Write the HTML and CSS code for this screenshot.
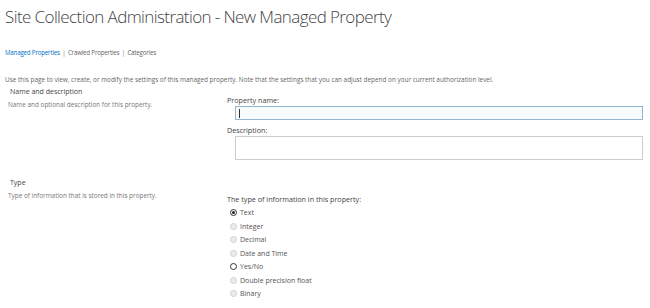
FILE: index.html
```html
<!DOCTYPE html>
<html lang="en">
<head>
    <meta charset="UTF-8">
    <title>New Managed Property</title>
    <link rel="stylesheet" href="styles.css">
</head>
<body>
    <h1 class="page-title">Site Collection Administration - New Managed Property</h1>

    <div class="crumbs">
        <a href="#" class="crumb active">Managed Properties</a>
        <span class="sep">|</span>
        <a href="#" class="crumb">Crawled Properties</a>
        <span class="sep">|</span>
        <a href="#" class="crumb">Categories</a>
    </div>

    <p class="intro">Use this page to view, create, or modify the settings of this managed property. Note that the settings that you can adjust depend on your current authorization level.</p>

    <div class="section section-name">
        <div class="section-info">
            <h3>Name and description</h3>
            <p>Name and optional description for this property.</p>
        </div>
        <div class="section-fields">
            <label class="field-label">Property name:</label>
            <div class="text-input focused"><span class="caret"></span></div>
            <label class="field-label">Description:</label>
            <div class="text-area"></div>
        </div>
    </div>

    <div class="section section-type">
        <div class="section-info">
            <h3>Type</h3>
            <p>Type of information that is stored in this property.</p>
        </div>
        <div class="section-fields">
            <label class="field-label">The type of information in this property:</label>
            <div class="radio-list">
                <div class="radio"><span class="dot checked"></span>Text</div>
                <div class="radio"><span class="dot disabled"></span>Integer</div>
                <div class="radio"><span class="dot disabled"></span>Decimal</div>
                <div class="radio"><span class="dot disabled"></span>Date and Time</div>
                <div class="radio"><span class="dot"></span>Yes/No</div>
                <div class="radio"><span class="dot disabled"></span>Double precision float</div>
                <div class="radio"><span class="dot disabled"></span>Binary</div>
            </div>
        </div>
    </div>
</body>
</html>
```

FILE: styles.css
```css
:root {
    --text: #444;
    --muted: #777;
    --link: #0072c6;
}

body {
    font-family: 'Open Sans', 'Noto Sans', sans-serif;
    background: white;
    color: var(--text);
    margin: 0;
    padding: 0 7px 0 5px;
}

.page-title {
    font-weight: 300;
    font-size: 17px;
    line-height: 24px;
    margin: 5px 0 0;
    color: #444;
    letter-spacing: -0.6px;
}

.crumbs {
    margin-top: 19px;
    font-size: 6.2px;
    line-height: 10px;
    color: var(--muted);
    letter-spacing: -0.2px;
}

.crumb {
    color: #666;
    text-decoration: none;
}

.crumb.active {
    color: var(--link);
}

.sep {
    margin: 0 1px;
}

.intro {
    margin: 17px 0 0;
    font-size: 6.4px;
    line-height: 9px;
    color: #666;
}

.section {
    display: grid;
    grid-template-columns: 222px 1fr;
}

.section-info {
    padding-left: 3px;
}

.section-info h3 {
    font-weight: normal;
    font-size: 7px;
    line-height: 11px;
    margin: 0 0 0 2px;
    color: var(--text);
}

.section-info p {
    margin: 3px 0 0;
    font-size: 6.4px;
    line-height: 9px;
    color: var(--muted);
}

.section-name {
    margin-top: 2px;
}

.section-name .section-fields {
    padding-top: 9px;
}

.section-type {
    margin-top: 17px;
}

.section-type .section-fields {
    padding-top: 17px;
}

.field-label {
    display: block;
    font-size: 7.2px;
    line-height: 10px;
    color: var(--text);
    margin-bottom: 1px;
}

.text-input,
.text-area {
    margin-left: 8px;
    border: 1px solid #c6c6c6;
    background: white;
    box-sizing: border-box;
}

.text-input {
    height: 14px;
    margin-bottom: 5px;
    padding: 2px 3px;
}

.text-input.focused {
    border-color: #92b6cf;
    background: #f7fbfe;
}

.caret {
    display: block;
    width: 1px;
    height: 9px;
    background: #333;
}

.text-area {
    height: 24px;
    border-color: #cdcdcd;
}

.radio-list {
    margin-top: 2px;
    margin-left: 3px;
}

.radio {
    display: flex;
    align-items: center;
    height: 13.5px;
    font-size: 7px;
    color: #555;
}

.dot {
    width: 7px;
    height: 7px;
    border-radius: 50%;
    border: 1px solid #333;
    margin-right: 3px;
    box-sizing: border-box;
    position: relative;
}

.dot.checked::after {
    content: '';
    position: absolute;
    left: 1px;
    top: 1px;
    width: 3px;
    height: 3px;
    border-radius: 50%;
    background: #222;
}

.dot.disabled {
    border-color: #d0d0d0;
    background: #ececec;
}
```
